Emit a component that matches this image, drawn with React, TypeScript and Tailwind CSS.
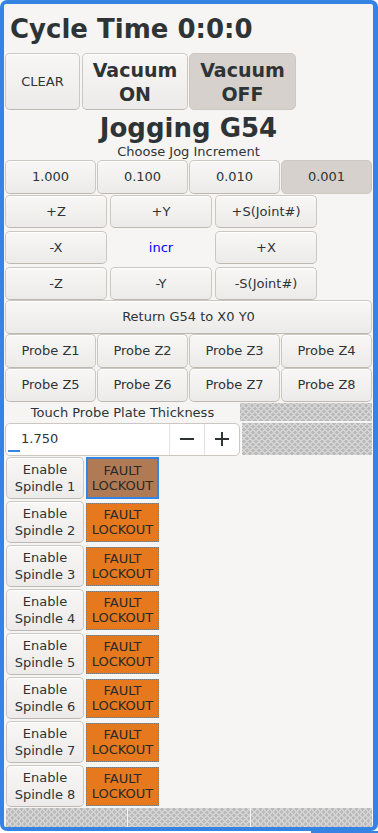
import React from "react";

const btn =
  "flex items-center justify-center rounded-[5px] border border-[#cdc7c2] border-b-[#bfb8b1] bg-linear-to-b from-[#f8f7f6] to-[#edebe9] text-[13px] text-[#2e3436] shadow-[inset_0_1px_#ffffff]";
const pressed =
  "flex items-center justify-center rounded-[5px] border border-[#cdc7c2] bg-[#d6d1cd] text-[13px] text-[#2e3436]";
const hatch =
  "bg-[#bababa] bg-[image:repeating-linear-gradient(45deg,#d4d4d4_0_1.3px,transparent_1.3px_4.24px),repeating-linear-gradient(-45deg,#d4d4d4_0_1.3px,transparent_1.3px_4.24px)]";

export default function App() {
  const spindles = [1, 2, 3, 4, 5, 6, 7, 8];
  return (
    <div className="w-[378px] h-[833px] bg-white font-['DejaVu_Sans',sans-serif] text-[#2e3436]">
      <div className="h-[831px] rounded-[7px] bg-[#3584e4] pt-[4px] pl-[4px] pr-[5px] pb-[4px] flex flex-col">
        <div className="flex-1 bg-[#f6f5f4] px-[1px] flex flex-col rounded-[2px]">
          {/* header */}
          <div className="h-[49px] flex items-center pl-[5px] gap-[9px] text-[26px] font-bold leading-[30px]">
            <span>Cycle Time</span>
            <span>0:0:0</span>
          </div>
          {/* buttons row */}
          <div className="h-[57px] flex">
            <div className={btn + " w-[75px]"}>CLEAR</div>
            <div className={btn + " w-[106px] ml-[2px] flex-col text-[19px] font-bold leading-[24px]"}>
              <span>Vacuum</span>
              <span>ON</span>
            </div>
            <div className={pressed + " w-[107px] ml-[1px] flex-col text-[19px] font-bold leading-[24px]"}>
              <span>Vacuum</span>
              <span>OFF</span>
            </div>
          </div>
          {/* jogging */}
          <div className="h-[33px] pt-[3px] text-center text-[26px] font-bold leading-[30px]">Jogging G54</div>
          <div className="h-[17px] text-center text-[13px] leading-[17px]">Choose Jog Increment</div>
          {/* increments */}
          <div className="grid grid-cols-4 gap-x-[1px] h-[34px]">
            <div className={btn}>1.000</div>
            <div className={btn}>0.100</div>
            <div className={btn}>0.010</div>
            <div className={pressed}>0.001</div>
          </div>
          {/* jog grid */}
          <div className="mt-[1px] grid grid-cols-[102px_102px_102px] auto-rows-[33px] gap-x-[3px] gap-y-[3px]">
            <div className={btn}>+Z</div>
            <div className={btn}>+Y</div>
            <div className={btn}>+S(Joint#)</div>
            <div className={btn}>-X</div>
            <div className="flex items-center justify-center text-[13px] text-[#0000ff]">incr</div>
            <div className={btn}>+X</div>
            <div className={btn}>-Z</div>
            <div className={btn}>-Y</div>
            <div className={btn}>-S(Joint#)</div>
          </div>
          <div className={btn + " h-[34px]"}>Return G54 to X0 Y0</div>
          <div className="grid grid-cols-4 gap-x-[1px] auto-rows-[34px]">
            {[1, 2, 3, 4, 5, 6, 7, 8].map((n) => (
              <div key={n} className={btn}>
                Probe Z{n}
              </div>
            ))}
          </div>
          {/* thickness label */}
          <div className="h-[20px] flex">
            <div className="w-[235px] flex items-center justify-center text-[13px] leading-[15px]">
              Touch Probe Plate Thickness
            </div>
            <div className={hatch + " flex-1 my-[1px]"} />
          </div>
          {/* spin entry */}
          <div className="h-[34px] flex items-center">
            <div className="relative w-[235px] h-[33px] flex rounded-[5px] border border-[#cdc7c2] bg-white">
              <div className="flex-1 flex items-center pl-[15px] text-[13px]">1.750</div>
              <div className="w-[35px] flex items-center justify-center border-l border-[#e4e1de]">
                <svg width="14" height="14" viewBox="0 0 14 14">
                  <line x1="0" y1="7" x2="14" y2="7" stroke="#2e3436" strokeWidth="2" />
                </svg>
              </div>
              <div className="w-[35px] flex items-center justify-center border-l border-[#e4e1de]">
                <svg width="14" height="14" viewBox="0 0 14 14">
                  <line x1="0" y1="7" x2="14" y2="7" stroke="#2e3436" strokeWidth="2" />
                  <line x1="7" y1="0" x2="7" y2="14" stroke="#2e3436" strokeWidth="2" />
                </svg>
              </div>
              <div className="absolute left-[2px] bottom-[3px] w-[12px] h-[2px] bg-[#3584e4]" />
            </div>
            <div className={hatch + " flex-1 ml-[2px] h-[32px]"} />
          </div>
          {/* spindles */}
          {spindles.map((n) => (
            <div key={n} className="h-[44px] flex items-center">
              <div className={btn + " w-[78px] h-[42px] ml-[1px] flex-col text-[13px] leading-[17px]"}>
                <span>Enable</span>
                <span>Spindle {n}</span>
              </div>
              {n === 1 ? (
                <div className="ml-[2px] w-[73px] h-[42px] border-2 border-[#3584e4] bg-[#b07a55] flex flex-col items-center justify-center text-[13px] leading-[15px] text-[#2a2a2a]">
                  <span>FAULT</span>
                  <span>LOCKOUT</span>
                </div>
              ) : (
                <div className="ml-[2px] w-[73px] h-[39px] border border-dotted border-[#7a7a7a] bg-[#e6781e] flex flex-col items-center justify-center text-[13px] leading-[15px] text-[#2a2a2a]">
                  <span>FAULT</span>
                  <span>LOCKOUT</span>
                </div>
              )}
            </div>
          ))}
          {/* bottom hatch */}
          <div className="h-[19px] grid grid-cols-3 gap-x-[1px] pl-[1px]">
            <div className={hatch} />
            <div className={hatch} />
            <div className={hatch} />
          </div>
        </div>
      </div>
      <div className="flex h-[2px]">
        <div className="w-[311px] bg-white" />
        <div className="flex-1 bg-[#3584e4]" />
      </div>
    </div>
  );
}
